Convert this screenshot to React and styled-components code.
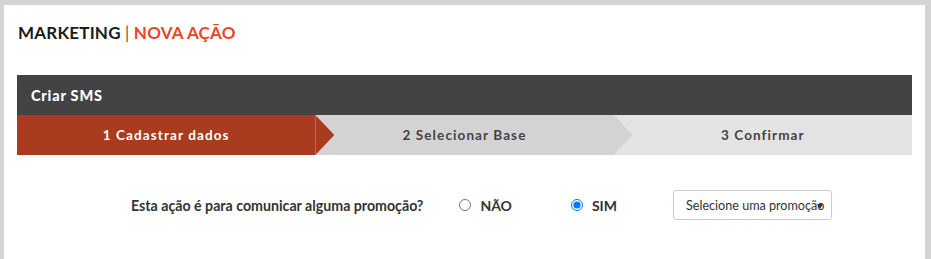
import styled, { createGlobalStyle } from 'styled-components';

const Global = createGlobalStyle`
    html, body {
        margin: 0;
        padding: 0;
        background: #d4d4d4;
        font-family: Lato, "Open Sans", sans-serif;
    }
`
const Frame = styled.div`
    height: 259px;
    padding: 5px 6px 0 4px;
    box-sizing: border-box;
`
const Panel = styled.main`
    background: #fff;
    height: 100%;
    padding: 0 13px;
`
const Title = styled.h1`
    margin: 0;
    padding: 20px 0 0 1px;
    height: 50px;
    font-size: 17px;
    font-weight: 700;
    letter-spacing: 0.2px;
    color: #1b1b1b;
    line-height: 16px;
`
const Sep = styled.span`
    color: #7a5a10;
    font-weight: 400;
`
const Accent = styled.span`
    color: #ee4423;
`
const BoxHead = styled.div`
    background: #434343;
    color: #fff;
    height: 40px;
    display: flex;
    align-items: center;
    padding-left: 14px;
    font-size: 14.5px;
    font-weight: 900;
    letter-spacing: 0.8px;
`
const Steps = styled.div`
    display: flex;
    height: 40px;
`
const Step = styled.div`
    flex: 1;
    position: relative;
    display: flex;
    align-items: center;
    justify-content: center;
    background: ${p => p.$bg};
    color: ${p => p.$active ? '#fff' : '#444'};
    font-size: 13.5px;
    font-weight: 700;
    letter-spacing: 1.1px;
    z-index: ${p => p.$z};
    &::after {
        content: '';
        display: ${p => p.$arrow ? 'block' : 'none'};
        position: absolute;
        top: 0;
        right: -19px;
        width: 19px;
        height: 40px;
        background: ${p => p.$bg};
        clip-path: polygon(0 0, 100% 50%, 0 100%);
    }
`
const Row = styled.div`
    display: flex;
    align-items: center;
    padding: 35px 0 0 114px;
    font-size: 14px;
    font-weight: 700;
    color: #333;
`
const Question = styled.span`
    font-size: 14.2px;
    margin-right: 36px;
`
const Option = styled.label`
    display: flex;
    align-items: center;
    gap: 9px;
    margin-right: ${p => p.$gap}px;
    font-size: 14px;
    font-weight: 700;
    input {
        margin: 0;
        width: 12px;
        height: 12px;
    }
`
const Select = styled.div`
    position: relative;
    width: 159px;
    height: 30px;
    box-sizing: border-box;
    border: 1px solid #ccc;
    border-radius: 3px;
    display: flex;
    align-items: center;
    padding-left: 12px;
    font-size: 12.6px;
    font-weight: 400;
    color: #333;
    white-space: nowrap;
`
const Caret = styled.span`
    position: absolute;
    right: 8px;
    top: 13px;
    width: 0;
    height: 0;
    border-left: 3.5px solid transparent;
    border-right: 3.5px solid transparent;
    border-top: 5px solid #333;
`

const steps = [
    { label: '1 Cadastrar dados', bg: '#a93b1f', active: true },
    { label: '2 Selecionar Base', bg: '#d3d3d3' },
    { label: '3 Confirmar', bg: '#e3e3e3' },
]

const App = () => {
    return (
        <>
            <Global />
            <Frame>
                <Panel>
                    <Title>MARKETING <Sep>|</Sep> <Accent>NOVA AÇÃO</Accent></Title>
                    <BoxHead>Criar SMS</BoxHead>
                    <Steps>
                        {steps.map((s, i) => (
                            <Step key={s.label} $bg={s.bg} $active={s.active} $arrow={i < 2} $z={3 - i}>
                                {s.label}
                            </Step>
                        ))}
                    </Steps>
                    <Row>
                        <Question>Esta ação é para comunicar alguma promoção?</Question>
                        <Option $gap={59}><input type="radio" name="promo" />NÃO</Option>
                        <Option $gap={56}><input type="radio" name="promo" defaultChecked />SIM</Option>
                        <Select>Selecione uma promoção<Caret /></Select>
                    </Row>
                </Panel>
            </Frame>
        </>
    )
}

export default App;
